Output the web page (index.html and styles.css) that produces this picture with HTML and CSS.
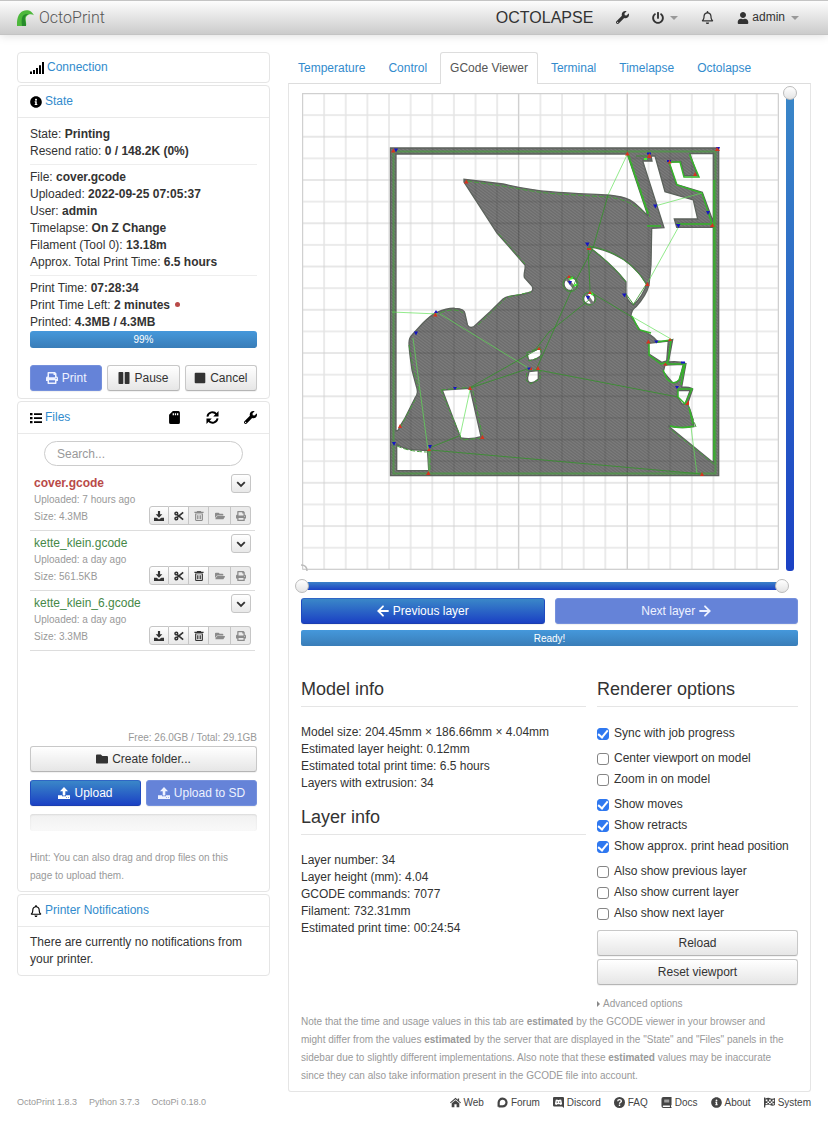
FILE: index.html
```html
<!DOCTYPE html>
<html lang="en">
<head>
<meta charset="utf-8">
<meta name="viewport" content="width=device-width, initial-scale=1">
<title>OctoPrint</title>
<link rel="stylesheet" href="styles.css">
</head>
<body>
<svg class="sprite" aria-hidden="true">
  <symbol id="wrench" viewBox="0 0 512 512"><path d="M507.73 109.1c-2.24-9.03-13.54-12.09-20.12-5.51l-74.36 74.36-67.88-11.31-11.31-67.88 74.36-74.36c6.62-6.62 3.43-17.9-5.66-20.16-47.38-11.74-99.55.91-136.58 37.93-39.64 39.64-50.55 97.1-34.05 147.2L18.74 402.76c-24.99 24.99-24.99 65.51 0 90.5 24.99 24.99 65.51 24.99 90.5 0l213.21-213.21c50.12 16.71 107.47 5.68 147.37-34.22 37.07-37.07 49.7-89.32 37.91-136.73zM64 472c-13.25 0-24-10.75-24-24 0-13.26 10.75-24 24-24s24 10.74 24 24c0 13.25-10.75 24-24 24z"/></symbol>
  <symbol id="power" viewBox="0 0 512 512"><path d="M400 54.1c63 45 104 118.6 104 201.9 0 136.8-110.8 247.7-247.5 248C120 504.3 8.2 393 8 256.4 7.9 173.1 48.9 99.3 111.8 54.2c11.7-8.3 28-4.8 35 7.7L162.6 90c5.9 10.5 3.1 23.8-6.6 31-41.5 30.8-68 79.6-68 134.9-.1 92.3 74.5 168.1 168 168.1 91.6 0 168.6-74.2 168-169.1-.3-51.8-24.7-101.8-68.1-134-9.7-7.2-12.4-20.5-6.5-30.9l15.8-28.1c7-12.4 23.2-16.1 34.8-7.8zM296 264V24c0-13.3-10.7-24-24-24h-32c-13.3 0-24 10.7-24 24v240c0 13.3 10.7 24 24 24h32c13.3 0 24-10.7 24-24z"/></symbol>
  <symbol id="bell" viewBox="0 0 448 512"><path d="M439.39 362.29c-19.32-20.76-55.47-51.99-55.47-154.29 0-77.7-54.48-139.9-127.94-155.16V32c0-17.67-14.32-32-31.98-32s-31.98 14.33-31.98 32v20.84C118.56 68.1 64.08 130.3 64.08 208c0 102.3-36.15 133.53-55.47 154.29-6 6.45-8.66 14.16-8.61 21.71.11 16.4 12.98 32 32.1 32h383.8c19.12 0 32-15.6 32.1-32 .05-7.55-2.61-15.27-8.61-21.71zM67.53 368c21.22-27.97 44.42-74.33 44.53-159.42 0-.2-.06-.38-.06-.58 0-61.86 50.14-112 112-112s112 50.14 112 112c0 .2-.06.38-.06.58.11 85.1 23.31 131.46 44.53 159.42H67.53zM224 512c35.32 0 63.97-28.65 63.97-64H160.03c0 35.35 28.65 64 63.97 64z"/></symbol>
  <symbol id="user" viewBox="0 0 448 512"><path d="M224 256c70.7 0 128-57.3 128-128S294.7 0 224 0 96 57.3 96 128s57.3 128 128 128zm89.6 32h-16.7c-22.2 10.2-46.9 16-72.9 16s-50.6-5.8-72.9-16h-16.7C60.2 288 0 348.2 0 422.4V464c0 26.5 21.5 48 48 48h352c26.5 0 48-21.5 48-48v-41.6c0-74.2-60.2-134.4-134.4-134.4z"/></symbol>
  <symbol id="info" viewBox="0 0 512 512"><path d="M256 8C119.043 8 8 119.083 8 256c0 136.997 111.043 248 248 248s248-111.003 248-248C504 119.083 392.957 8 256 8zm0 110c23.196 0 42 18.804 42 42s-18.804 42-42 42-42-18.804-42-42 18.804-42 42-42zm56 254c0 6.627-5.373 12-12 12h-88c-6.627 0-12-5.373-12-12v-24c0-6.627 5.373-12 12-12h12v-64h-12c-6.627 0-12-5.373-12-12v-24c0-6.627 5.373-12 12-12h64c6.627 0 12 5.373 12 12v100h12c6.627 0 12 5.373 12 12v24z"/></symbol>
  <symbol id="print" viewBox="0 0 512 512"><path d="M448 192V77.25c0-8.49-3.37-16.62-9.37-22.63L393.37 9.37c-6-6-14.14-9.37-22.63-9.37H96C78.33 0 64 14.33 64 32v160c-35.35 0-64 28.65-64 64v112c0 8.84 7.16 16 16 16h48v96c0 17.67 14.33 32 32 32h320c17.67 0 32-14.33 32-32v-96h48c8.84 0 16-7.16 16-16V256c0-35.35-28.65-64-64-64zm-64 256H128v-96h256v96zm0-224H128V64h192v48c0 8.84 7.16 16 16 16h48v96zm48 72c-13.25 0-24-10.75-24-24 0-13.26 10.75-24 24-24s24 10.74 24 24c0 13.25-10.75 24-24 24z"/></symbol>
  <symbol id="folder" viewBox="0 0 512 512"><path d="M464 128H272l-64-64H48C21.49 64 0 85.49 0 112v288c0 26.51 21.49 48 48 48h416c26.51 0 48-21.49 48-48V176c0-26.51-21.49-48-48-48z"/></symbol>
  <symbol id="folder-open" viewBox="0 0 576 512"><path d="M572.694 292.093L500.27 416.248A63.997 63.997 0 0 1 444.989 448H45.025c-18.523 0-30.064-20.093-20.731-36.093l72.424-124.155A64 64 0 0 1 152 256h399.964c18.523 0 30.064 20.093 20.73 36.093zM152 224h328v-48c0-26.51-21.49-48-48-48H272l-64-64H48C21.49 64 0 85.49 0 112v278.046l69.077-118.418C86.214 242.25 117.989 224 152 224z"/></symbol>
  <symbol id="signal" viewBox="0 0 14 12"><path d="M0 9.500h2V12H0zM3 8h2v4H3zM6 6h2v6H6zM9 3.300h2V12H9zM12 0h2v12h-2z"/></symbol>
  <symbol id="list" viewBox="0 0 12 12"><path d="M0 1h2.500v2.300H0zM0 5h2.500v2.300H0zM0 9h2.500v2.300H0zM4 1.200h8v1.800H4zM4 5.200h8v1.800H4zM4 9.200h8v1.800H4z"/></symbol>
  <symbol id="sd" viewBox="0 0 10 12"><path fill-rule="evenodd" d="M3.500 0H8.500A1.500 1.500 0 0 1 10 1.500V10.500A1.500 1.500 0 0 1 8.500 12H1.500A1.500 1.500 0 0 1 0 10.500V3.500zM3.300 2v2h1.200V2zM5.300 2v2h1.200V2zM7.300 2v2h1.200V2z"/></symbol>
  <symbol id="sync" viewBox="0 0 14 14"><path fill="none" stroke="currentColor" stroke-width="2" d="M1.500 6A5.500 5.500 0 0 1 11.300 3.600M12.500 8A5.500 5.500 0 0 1 2.700 10.400"/><path d="M13.500 0v5.800H7.800zM.5 14V8.200h5.700z"/></symbol>
  <symbol id="download" viewBox="0 0 12 12"><path d="M4.700 0h2.600v4H10L6 8 2 4h2.700zM0 8h3.200L6 10.300 8.800 8H12v4H0z"/></symbol>
  <symbol id="upload" viewBox="0 0 12 12"><path fill-rule="evenodd" d="M4.700 8.500h2.600V4.200H10L6 0 2 4.200h2.700zM0 8.300h4v1h4v-1h4V12H0zM8.200 10.200v.8h.8v-.8zM10 10.200v.8h.8v-.8z"/></symbol>
  <symbol id="cut" viewBox="0 0 12 12"><path fill="none" stroke="currentColor" stroke-width="2" d="M3.800 4.300L11 10.400M3.800 7.700L11 1.600"/><circle cx="2.800" cy="3" r="1.600" fill="none" stroke="currentColor" stroke-width="1.800"/><circle cx="2.800" cy="9" r="1.600" fill="none" stroke="currentColor" stroke-width="1.800"/></symbol>
  <symbol id="trash" viewBox="0 0 11 12"><path fill-rule="evenodd" d="M3.300 0h4.400l.6 1H11v1.400H0V1h2.700zM.8 3h9.400v7.600A1.400 1.400 0 0 1 8.800 12H2.200A1.400 1.400 0 0 1 .8 10.600zM2.200 4v6.800h6.600V4z"/><path d="M3.100 5h1v5h-1zM5 5h1v5H5zM6.900 5h1v5h-1z"/></symbol>
  <symbol id="pause" viewBox="0 0 12 12"><rect x=".5" width="4.800" height="12" rx=".8"/><rect x="6.700" width="4.800" height="12" rx=".8"/></symbol>
  <symbol id="stop" viewBox="0 0 12 12"><rect x=".7" y=".7" width="10.600" height="10.600" rx="1"/></symbol>
  <symbol id="chevron" viewBox="0 0 10 10"><path fill="none" stroke="currentColor" stroke-width="1.800" d="M1.200 3.200L5 7l3.800-3.800"/></symbol>
  <symbol id="left" viewBox="0 0 12 12"><path fill="none" stroke="currentColor" stroke-width="1.800" stroke-linecap="round" d="M6 1.300L1.300 6 6 10.700M1.500 6h9.500"/></symbol>
  <symbol id="right" viewBox="0 0 12 12"><path fill="none" stroke="currentColor" stroke-width="1.800" stroke-linecap="round" d="M6 1.300L10.700 6 6 10.700M10.500 6H1"/></symbol>
  <symbol id="home" viewBox="0 0 13 12"><path d="M6.500.5l2.700 2.300V1.200h1.600v3L13 6l-.8 1-5.700-4.700L.8 7 0 6zM6.500 3.300L11 7v4.500H7.800V8H5.200v3.500H2V7z"/></symbol>
  <symbol id="forum" viewBox="0 0 12 12"><path fill="none" stroke="currentColor" stroke-width="2.400" d="M1.800 10.600V6A4.300 4.300 0 1 1 6 10.300H1.800"/></symbol>
  <symbol id="discord" viewBox="0 0 12 12"><path fill-rule="evenodd" d="M1.500 0h9A1.400 1.400 0 0 1 12 1.400V12l-2-1.600H1.500A1.400 1.400 0 0 1 0 9V1.400A1.400 1.400 0 0 1 1.500 0zM3 3L2 8l2 .7.600-.8h2.800l.6.800 2-.7-1-5-1.700-.4-.4.6H5.100l-.4-.6zM4 5h1.300v1.400H4zM6.700 5H8v1.400H6.700z"/></symbol>
  <symbol id="faq" viewBox="0 0 12 12"><circle cx="6" cy="6" r="6"/><path fill="none" stroke="#fff" stroke-width="1.500" d="M4.100 4.700C4.100 2.200 8 2.300 8 4.500 8 5.800 6 5.700 6 7.300M6 8.200v1.600"/></symbol>
  <symbol id="book" viewBox="0 0 11 12"><path fill-rule="evenodd" d="M2.200 0H11v9h-.6v1.800h.6V12H2.200A2.200 2.200 0 0 1 0 9.800V2.200A2.200 2.200 0 0 1 2.200 0zM3 3v.8h5.500V3zM3 4.800v.8h5.500v-.8zM2.200 9.200a.8.800 0 0 0 0 1.600h7V9.200z"/></symbol>
  <symbol id="flag" viewBox="0 0 13 12"><path fill-rule="evenodd" d="M0 0h1.500v1.200C4 0 6 0 8 1.200c2 .6 3.500.1 5-.5V9c-2 1-4 1-6 0-2-.6-3.500-.4-5.500.3V12H0zM2 2.500v2h2v-2zM6 2.500v2h2v-2zM10 2.800v2h2v-2zM4 4.700v2h2v-2zM8 4.900v2h2v-2zM2 6.600v1.600h2V6.600zM6 6.700v1.500h2V6.700zM10 7v1.400h2V7z"/></symbol>
</svg>

<header class="navbar">
  <a class="brand" href="#">
    <svg class="logo" viewBox="0 0 17 16" aria-hidden="true"><path fill="#4db83c" d="M0 16C-.3 11 .4 6 3.300 3 6-.2 11-.6 14.200 1.700c1.300 1 2.200 2.200 2.700 3.600-1.500-1.100-3.200-1.300-5-.8-2 .8-3.200 2.200-3.200 4.300C8.700 11 9.500 13 9 16z"/><path fill="#278a2c" d="M5 16C4.600 12.500 4.300 9 5.500 6.500c1-2 3.500-3 5.800-2.300-2.400.8-3.600 2.400-3.500 4.800.1 2.400 1.600 4.600 1.200 7z"/></svg>
    <span>OctoPrint</span>
  </a>
  <nav class="nav">
    <a class="lapse" href="#">OCTOLAPSE</a>
    <a href="#" aria-label="Settings"><svg class="icon nav-icon"><use href="#wrench"/></svg></a>
    <a href="#" aria-label="System"><svg class="icon"><use href="#power"/></svg><i class="caret"></i></a>
    <a href="#" aria-label="Notifications"><svg class="icon nav-icon"><use href="#bell"/></svg></a>
    <a href="#"><svg class="icon"><use href="#user"/></svg><span class="admin">admin</span><i class="caret"></i></a>
  </nav>
</header>

<div class="page">
  <aside class="sidebar">
    <section class="panel"><h2 class="heading"><svg class="icon wide"><use href="#signal"/></svg><a href="#">Connection</a></h2></section>

    <section class="panel">
      <h2 class="heading"><svg class="icon"><use href="#info"/></svg><a href="#">State</a></h2>
      <div class="inner state">
        <div>State: <b>Printing</b></div>
        <div>Resend ratio: <b>0 / 148.2K (0%)</b></div>
        <hr>
        <div>File: <b>cover.gcode</b></div>
        <div>Uploaded: <b>2022-09-25 07:05:37</b></div>
        <div>User: <b>admin</b></div>
        <div>Timelapse: <b>On Z Change</b></div>
        <div>Filament (Tool 0): <b>13.18m</b></div>
        <div>Approx. Total Print Time: <b>6.5 hours</b></div>
        <hr>
        <div>Print Time: <b>07:28:34</b></div>
        <div>Print Time Left: <b>2 minutes</b> <i class="dot"></i></div>
        <div>Printed: <b>4.3MB / 4.3MB</b></div>
        <div class="bar">99%</div>
        <div class="jobs">
          <button class="btn primary" disabled><svg class="icon"><use href="#print"/></svg>Print</button>
          <button class="btn"><svg class="icon"><use href="#pause"/></svg>Pause</button>
          <button class="btn"><svg class="icon"><use href="#stop"/></svg>Cancel</button>
        </div>
      </div>
    </section>

    <section class="panel">
      <div class="heading files-heading">
        <h2 class="title"><svg class="icon"><use href="#list"/></svg><a href="#">Files</a></h2>
        <div class="tools">
          <button class="tool" aria-label="SD card"><svg class="icon"><use href="#sd"/></svg></button>
          <button class="tool" aria-label="Refresh"><svg class="icon"><use href="#sync"/></svg></button>
          <button class="tool" aria-label="File settings"><svg class="icon"><use href="#wrench"/></svg></button>
        </div>
      </div>
      <div class="inner">
        <input class="search" type="text" placeholder="Search..." aria-label="Search">
        <div class="list">
          <article class="entry printing">
            <h3 class="name">cover.gcode</h3><button class="mini toggle" aria-label="Details"><svg class="icon"><use href="#chevron"/></svg></button>
            <div class="meta"><div>Uploaded: 7 hours ago</div><div>Size: 4.3MB</div></div>
            <div class="group"><button class="mini" aria-label="Download"><svg class="icon"><use href="#download"/></svg></button><button class="mini" aria-label="Cut"><svg class="icon"><use href="#cut"/></svg></button><button class="mini" aria-label="Delete" disabled><svg class="icon"><use href="#trash"/></svg></button><button class="mini open" aria-label="Load" disabled><svg class="icon"><use href="#folder-open"/></svg></button><button class="mini" aria-label="Print" disabled><svg class="icon"><use href="#print"/></svg></button></div>
          </article>
          <article class="entry">
            <h3 class="name">kette_klein.gcode</h3><button class="mini toggle" aria-label="Details"><svg class="icon"><use href="#chevron"/></svg></button>
            <div class="meta"><div>Uploaded: a day ago</div><div>Size: 561.5KB</div></div>
            <div class="group"><button class="mini" aria-label="Download"><svg class="icon"><use href="#download"/></svg></button><button class="mini" aria-label="Cut"><svg class="icon"><use href="#cut"/></svg></button><button class="mini" aria-label="Delete"><svg class="icon"><use href="#trash"/></svg></button><button class="mini open" aria-label="Load" disabled><svg class="icon"><use href="#folder-open"/></svg></button><button class="mini" aria-label="Print" disabled><svg class="icon"><use href="#print"/></svg></button></div>
          </article>
          <article class="entry">
            <h3 class="name">kette_klein_6.gcode</h3><button class="mini toggle" aria-label="Details"><svg class="icon"><use href="#chevron"/></svg></button>
            <div class="meta"><div>Uploaded: a day ago</div><div>Size: 3.3MB</div></div>
            <div class="group"><button class="mini" aria-label="Download"><svg class="icon"><use href="#download"/></svg></button><button class="mini" aria-label="Cut"><svg class="icon"><use href="#cut"/></svg></button><button class="mini" aria-label="Delete"><svg class="icon"><use href="#trash"/></svg></button><button class="mini open" aria-label="Load" disabled><svg class="icon"><use href="#folder-open"/></svg></button><button class="mini" aria-label="Print" disabled><svg class="icon"><use href="#print"/></svg></button></div>
          </article>
        </div>
        <div class="space">Free: 26.0GB / Total: 29.1GB</div>
        <button class="btn block"><svg class="icon"><use href="#folder"/></svg>Create folder...</button>
        <div class="uploads">
          <button class="btn primary"><svg class="icon"><use href="#upload"/></svg>Upload</button>
          <button class="btn primary" disabled><svg class="icon"><use href="#upload"/></svg>Upload to SD</button>
        </div>
        <div class="bar empty"></div>
        <p class="hint">Hint: You can also drag and drop files on this page to upload them.</p>
      </div>
    </section>

    <section class="panel">
      <h2 class="heading"><svg class="icon"><use href="#bell"/></svg><a href="#">Printer Notifications</a></h2>
      <div class="inner">There are currently no notifications from your printer.</div>
    </section>
  </aside>

  <main class="main">
    <nav class="tabs">
      <a href="#">Temperature</a><a href="#">Control</a><a class="active" href="#">GCode Viewer</a><a href="#">Terminal</a><a href="#">Timelapse</a><a href="#">Octolapse</a>
    </nav>
    <div class="content">
      <div class="viewer">
        <svg class="canvas" viewBox="301 92 479 479" role="img" aria-label="Layer 34">
          <defs>
            <pattern id="bed-v" x="301.500" y="93" width="21.630" height="476" patternUnits="userSpaceOnUse"><path stroke="#e6e6e6" stroke-width="1.600" d="M1 0v476"/></pattern>
            <pattern id="bed-h" x="302" y="92.500" width="476" height="43.260" patternUnits="userSpaceOnUse"><path stroke="#cfcfcf" stroke-width="1" d="M0 1h476"/><path stroke="#e4e4e4" stroke-width="1.400" d="M0 22.600h476"/></pattern>
            <pattern id="infill" width="4" height="3" patternUnits="userSpaceOnUse"><path stroke="#fff" stroke-opacity=".08" stroke-width=".8" d="M0 0l4 3"/><path stroke="#000" stroke-opacity=".07" stroke-width=".8" d="M0 1.500l2 1.500M2 0l2 1.500"/></pattern>
            <path id="part" d="M390.500 148H718.700V475.700H390.500Z
              M396 154V431L398.300 430C400 425 403 422 405 418L415 398C418 394 418 391 416 385L412 370C410 355 409 350 409 343C409 339 410 337 412 335L423 323C428 318 432 314 437 312.300C445 309 450 308 455 308.300C462 308.500 465 311 465 314L467.500 325C469 328 471 328 474 326.500L490 311.700L503 299C508 295 515 296 522 294.500L531 292Q534 290 532 286L524.500 277.700C523 274 526 269 525 265L497 233L464 182V179.300L503 184C525 189 540 191 550 191.700C575 194 595 194 608 195C618 196 624 197 630 200C637 204 643 211 648 216L627.300 154Z
              M396.700 444.300Q405 451 427.500 450.300L428.700 470.700H396.700Z
              M442.300 390L470 388.300L481 436.700Q471 440 460.700 438Z
              M528 353Q535 351 540 348.300Q542 353 540.500 356Q534 361 529 360Q527 357 528 353Z
              M529 371.500L538.300 370.700V379Q534 383 530.700 382.700Q527 382 527.700 377Z
              M577 284a6.500 6.500 0 1 0-13 0a6.500 6.500 0 1 0 13 0
              M595 298.700a5.700 5.700 0 1 0-11.400 0a5.700 5.700 0 1 0 11.400 0
              M588.500 246.500Q628 253 646.700 284Q643 296 633.500 305Q626 300 626 293V282Q613 265 588.500 246.500Z
              M651.700 228.300L664 227.700L642.700 161H652L651 156H655L665 191.700L693.300 200L697.700 219H674.300L676.700 227.300H713.300V462.700L668.300 426Q682 429 694 426.500Q692 412 687.500 404L692.700 389Q690 387 681.700 387L686 363.500Q679 361 668.500 362L672.700 339.500Q665 342 657 341Q652 334 640 330L631 316.700Q631 310 636 306.700Q646 296 649 285L651 265Z
              M648.300 343.300L668.300 341L666.700 361L661.700 362.300L649 354Z
              M665 365L683.300 364.300L679.300 380Q676 384 672 382L663.300 371.700Z
              M677.300 390.700H690L685 404H682L677.300 396.700Z
              M690 153.700H713.300V222L702.300 192.300L676 184.300L669 162.300L681 161.700L684.300 175.700H697.300Z"/>
          </defs>
          <path fill="url(#bed-v)" d="M302 93h476v476H302z"/>
          <path fill="url(#bed-h)" d="M302 93h476v476H302z"/>
          <path fill="none" stroke="#d0d0d0" d="M302 93.500H778.500V569.500H302.500V93M518.500 93V569M627.500 93V569"/>
          <path fill="none" stroke="#bbb" stroke-width="1.500" d="M301 565q6 0 6 6"/>
          <use href="#part" fill="#000" fill-opacity=".55" fill-rule="evenodd"/>
          <use href="#part" fill="url(#infill)" fill-rule="evenodd"/>
          <use href="#part" fill="none" stroke="#5c625c" stroke-width="1.300"/>
          <path fill="none" stroke="#4a9c42" stroke-width="2" stroke-opacity=".7" d="M393.500 151V473.500H715.500V151.500H393"/>
          <g fill="none" stroke="#3f9a36" stroke-width="1">
            <path stroke-dasharray="5 2" stroke="#489f3e" d="M467 181L503 186Q535 192 551 193.500L608 197Q632 200 645 214M629 155L650 217M409 345Q413 370 419 390M400 428L415 400M430 451V472M397 446Q410 452 429 452M441 390L472 387L483 438L462 440L441 390M715 228V465L669 428M696 427L688 405M440 313Q455 307 463 313M508 297L531 292M478 325L506 298M525 264L498 233"/>
            <path stroke="#35b52a" stroke-width="1.500" d="M651 333L640 330M657 342L671 340L668 362L661 364L649 355V343M665 364H685L681 385M663 370L667 379Q673 386 679 380L684 365M678 389L692 389L685 404L678 397V389M690 154V156L699 177H684L680 162H669L677 185L702 193L712 224H677M694 426Q682 429 670 426M693 424L689 408M714 180V460M632 316L639 330M647 226H661M628 155L648 214"/>
            <path d="M589 246Q628 253 646 284M626 282Q613 265 589 247M626 294L634 305"/>
            <circle cx="570.500" cy="284" r="7.500"/><circle cx="589.300" cy="298.700" r="6.500"/>
            <path stroke-dasharray="4 2" d="M526 353L541 347V357L529 361ZM527 370H540V379L530 384L526 380Z"/>
          </g>
          <path fill="none" stroke="#777" stroke-width="3" d="M567 279l8 10M586 294l7 10"/>
          <g fill="none" stroke="#5ce052" stroke-width=".9" stroke-opacity=".75">
            <path d="M392 312L438 314M440 314L530 369M627 155L608 195M655 206L702 193M678 228L648 282M631 316L671 339M691 427L697 474M413 338L428 450M470 390L460 436M429 452V472"/>
          </g>
          <g fill="none" stroke="#329328" stroke-width=".8">
            <path d="M608 195L593 248L576 280L536 370M647 283L633 305M429 448L459 436M470 388L530 368M471 387L540 348M538 370L678 397M430 450L702 474M535 350L549 332L589 300M588 247L590 290M592 293L632 317M650 156H636"/>
          </g>
          <path stroke="#44f233" stroke-width="2" d="M569 279l4-1M574 286l3-2M644 159h3M590 292l3 3"/>
          <path fill="#1515c4" d="M394 148.500h4l-2 4zM434 313h4l-2-3zM414 331.500h4l-2 4zM585 242.500h4.500l-2 4zM568 281h4l-2 4zM586 296h4l-2 4zM622 293.500h4.500l-2 4zM653 204.500h4.500l-2 4zM676 224h4.500l-2 4zM706 211h4l-2 4zM654 340.500h4.500l-2 3zM681 361.500h4v2h-4zM675 386h4l-2 3zM453 387h4l-2 3zM428 445h4l-2 4zM392 442h4l-2 4zM527 367.500h4l-2 3zM716 147h4l-2 4zM647 152.500h4v2h-4zM667 160h4v2h-4z"/>
          <path fill="#d7331e" d="M391 152.500h4.500l-2-4zM464 183.500h4.500l-2-4zM433 316.500h4.500l-2-4zM625 155.500h4.500l-2-4zM647 158h4.500l-2-5zM668 163.500h3.500l-2-4zM693 176h4l-2-4zM715 151h5l-3-4zM710 227h4.500l-2-4zM645 286h4.500l-2-4zM587 250h4v-2h-4zM567 278h4l-2-3zM588 294h4l-2-3zM646 343.500h4.500l-2-4zM668 341h4l-2-3zM663 365.500h4.500l-2-3zM685 405h4v-5zM537 350h4l-2-3zM529 370h3v-3zM536 370h4l-2-4zM468 390h4l-2-4zM480 439h4.500l-2-4zM398 428h4l-2-4zM427 451h4l-2-3zM426 475h4.500l-2-4zM700 476h4l-2-4z"/>
        </svg>
        <div class="layer"><input type="range" aria-label="Layer" min="0" max="34" value="34"></div>
      </div>
      <div class="commands"><input type="range" aria-label="First command" value="0"><input type="range" aria-label="Last command" value="100"></div>
      <div class="steps">
        <button class="btn primary"><svg class="icon"><use href="#left"/></svg>Previous layer</button>
        <button class="btn primary next" disabled>Next layer<svg class="icon"><use href="#right"/></svg></button>
      </div>
      <div class="bar ready">Ready!</div>
      <div class="details">
        <div class="infos">
          <h3 class="subhead">Model info</h3>
          <div class="facts"><div>Model size: 204.45mm × 186.66mm × 4.04mm</div><div>Estimated layer height: 0.12mm</div><div>Estimated total print time: 6.5 hours</div><div>Layers with extrusion: 34</div></div>
          <h3 class="subhead">Layer info</h3>
          <div class="facts"><div>Layer number: 34</div><div>Layer height (mm): 4.04</div><div>GCODE commands: 7077</div><div>Filament: 732.31mm</div><div>Estimated print time: 00:24:54</div></div>
        </div>
        <div class="options">
          <h3 class="subhead">Renderer options</h3>
          <div class="checks"><label><input type="checkbox" checked>Sync with job progress</label></div>
          <div class="checks"><label><input type="checkbox">Center viewport on model</label><label><input type="checkbox">Zoom in on model</label></div>
          <div class="checks"><label><input type="checkbox" checked>Show moves</label><label><input type="checkbox" checked>Show retracts</label><label><input type="checkbox" checked>Show approx. print head position</label></div>
          <div class="checks"><label><input type="checkbox">Also show previous layer</label><label><input type="checkbox">Also show current layer</label><label><input type="checkbox">Also show next layer</label></div>
          <div class="actions">
            <button class="btn block">Reload</button>
            <button class="btn block">Reset viewport</button>
          </div>
          <a class="advanced" href="#"><i class="arrow"></i>Advanced options</a>
        </div>
      </div>
      <p class="note">Note that the time and usage values in this tab are <b>estimated</b> by the GCODE viewer in your browser and might differ from the values <b>estimated</b> by the server that are displayed in the "State" and "Files" panels in the sidebar due to slightly different implementations. Also note that these <b>estimated</b> values may be inaccurate since they can also take information present in the GCODE file into account.</p>
    </div>
  </main>
</div>

<footer class="footer">
  <div class="versions"><span>OctoPrint 1.8.3</span><span>Python 3.7.3</span><span>OctoPi 0.18.0</span></div>
  <nav class="links">
    <a href="#"><svg class="icon"><use href="#home"/></svg>Web</a>
    <a href="#"><svg class="icon"><use href="#forum"/></svg>Forum</a>
    <a href="#"><svg class="icon"><use href="#discord"/></svg>Discord</a>
    <a href="#"><svg class="icon"><use href="#faq"/></svg>FAQ</a>
    <a href="#"><svg class="icon"><use href="#book"/></svg>Docs</a>
    <a href="#"><svg class="icon"><use href="#info"/></svg>About</a>
    <a href="#"><svg class="icon"><use href="#flag"/></svg>System</a>
  </nav>
</footer>
</body>
</html>
```
FILE: styles.css
```css
* { box-sizing: border-box; }
body {
  margin: 0;
  background: #fff;
  color: #333;
  font: 12px/17px "Liberation Sans", Arial, sans-serif;
}
a { color: #328bcd; text-decoration: none; }
h2, h3, p { margin: 0; font-weight: normal; }
button, input { font: inherit; color: inherit; margin: 0; }
.sprite { position: absolute; width: 0; height: 0; }
.icon { width: 12px; height: 12px; flex: none; fill: currentColor; }
.icon.wide { width: 14px; }

.navbar {
  display: flex;
  align-items: center;
  justify-content: space-between;
  height: 35px;
  padding: 0 29px 0 17px;
  border-top: 1px solid #c4c4c4;
  border-bottom: 1px solid #c4c4c4;
  background: linear-gradient(#fdfdfd, #cbcbcb);
  box-shadow: 0 1px 9px rgba(0, 0, 0, .13);
}
.brand {
  display: flex;
  align-items: center;
  gap: 5px;
  color: #555;
  font: 300 16px/20px Roboto, "Liberation Sans", sans-serif;
}
.logo { width: 17px; height: 16px; }
.nav { display: flex; align-items: center; gap: 23px; }
.nav a { display: flex; align-items: center; color: #333; }
.nav .lapse { font-size: 16px; }
.nav-icon { width: 13px; height: 13px; }
.admin { margin-left: 3px; }
.caret {
  margin-left: 6px;
  border: 4px solid transparent;
  border-top-color: #999;
  border-bottom: 0;
}

.page {
  display: grid;
  grid-template-columns: minmax(0, 253fr) minmax(0, 523fr);
  gap: 18px;
  align-items: start;
  padding: 17px 17px 0;
}
.sidebar { display: grid; gap: 2px; }
.panel {
  border: 1px solid #e5e5e5;
  border-radius: 4px;
}
.heading {
  display: flex;
  align-items: center;
  gap: 3px;
  height: 29px;
  padding: 0 12px;
  color: #000;
  font-size: 12px;
}
.heading:not(:only-child) { height: 32px; border-bottom: 1px solid #e9e9e9; }
.files-heading { justify-content: space-between; }
.title { display: flex; align-items: center; gap: 3px; font-size: 12px; }
.tools { display: flex; gap: 25px; }
.tool { display: flex; padding: 0; border: 0; background: none; color: #000; }
.tool .icon { width: 13px; height: 13px; }
.inner { padding: 7px 12px; }
.inner.state { padding-top: 8px; }
hr { height: 1px; margin: 4px 0; border: 0; background: #eee; }
.dot {
  display: inline-block;
  width: 5px;
  height: 5px;
  margin-left: 2px;
  border-radius: 50%;
  background: #b94a48;
  vertical-align: 2px;
}
.bar {
  height: 17px;
  border-radius: 3px;
  background: linear-gradient(#4598db, #397db8);
  color: #fff;
  font-size: 10px;
  line-height: 18px;
  text-align: center;
}
.bar.empty { margin-top: 8px; background: linear-gradient(#f1f1f1, #f9f9f9); box-shadow: inset 0 1px 2px rgba(0, 0, 0, .1); }
.btn {
  display: flex;
  align-items: center;
  justify-content: center;
  gap: 4px;
  height: 26px;
  padding: 0 8px;
  border: 1px solid #c8c8c8;
  border-bottom-color: #b5b5b5;
  border-radius: 3px;
  background: linear-gradient(#fff, #e6e6e6);
  box-shadow: 0 1px 1px rgba(0, 0, 0, .06);
  white-space: nowrap;
}
.btn.block { width: 100%; }
.btn.primary { border-color: #2f66c5 #1f4bc0 #1b3eb0; background: linear-gradient(#3a87c8, #1b41c4); color: #fff; }
.btn.primary:disabled { border-color: #7590dc; background: #6583d8; color: #eef2ff; }
.jobs { display: grid; grid-template-columns: repeat(3, minmax(0, 1fr)); gap: 5px; margin-top: 17px; }
.uploads { display: grid; grid-template-columns: repeat(2, minmax(0, 1fr)); gap: 5px; margin-top: 8px; }

.search {
  display: block;
  width: calc(100% - 28px);
  height: 25px;
  margin: 0 14px 5px;
  padding: 0 12px;
  border: 1px solid #ccc;
  border-radius: 13px;
  background: #fff;
}
.search::placeholder { color: #999; }
.list { height: 259px; margin-right: 2px; }
.entry {
  display: grid;
  grid-template-columns: 1fr auto;
  grid-template-rows: 20px 39px;
  align-items: start;
  height: 60px;
  padding: 0 4px;
  border-bottom: 1px solid #ddd;
}
.name { padding-top: 4px; color: #468847; font-size: 12px; }
.printing .name { color: #b94a48; font-weight: bold; }
.meta { color: #999; font-size: 10px; }
.mini {
  display: flex;
  align-items: center;
  justify-content: center;
  width: 20px;
  height: 19px;
  padding: 0;
  border: 1px solid #c6c6c6;
  background: linear-gradient(#fff, #e8e8e8);
}
.mini .icon { width: 10px; height: 10px; }
.mini:disabled { background: #ebebeb; color: #8a8a8a; }
.toggle { justify-self: end; margin-top: 3px; border-radius: 3px; }
.group { display: flex; padding-top: 15px; }
.group .mini + .mini { border-left: 0; }
.group .mini:first-child { border-radius: 3px 0 0 3px; }
.group .mini:last-child { border-radius: 0 3px 3px 0; }
.group .open { width: 22px; }
.space { color: #999; font-size: 10px; line-height: 16px; text-align: right; }
.hint { margin: 18px 0 -1px; padding-right: 12px; color: #999; font-size: 10px; line-height: 18px; }

.tabs { display: flex; flex-wrap: wrap; gap: 3px; }
.tabs a { padding: 7px 9px 6px; border: 1px solid transparent; border-bottom: 0; }
.tabs .active {
  z-index: 1;
  margin-bottom: -1px;
  border-color: #ddd;
  border-radius: 3px 3px 0 0;
  background: #fff;
  color: #555;
}
.content {
  padding: 8px 12px 6px;
  border: 1px solid #e5e5e5;
  border-top-color: #ddd;
  border-radius: 0 0 3px 3px;
}
.viewer { display: flex; gap: 6px; padding-right: 4px; }
.canvas { display: block; flex: 1; min-width: 0; }
.layer {
  position: relative;
  flex: none;
  width: 8px;
  margin-top: 1px;
  border-radius: 3px;
  background: linear-gradient(#3a87c8, #1b41c4);
}
.commands {
  position: relative;
  height: 8px;
  margin: 11px 15px 8px 0;
  border-radius: 3px;
  background: linear-gradient(#3a80c8, #1b41c4);
}
input[type="range"] {
  position: absolute;
  appearance: none;
  background: none;
  pointer-events: none;
}
.layer input { top: -7px; left: -3px; width: 14px; height: calc(100% + 14px); writing-mode: vertical-lr; direction: rtl; }
.commands input { top: -3px; left: -6px; width: calc(100% + 12px); height: 14px; }
input[type="range"]::-webkit-slider-thumb {
  appearance: none;
  width: 14px;
  height: 14px;
  border: 1px solid #bbb;
  border-radius: 50%;
  background: linear-gradient(#fff, #e4e4e4);
  pointer-events: auto;
}
.steps { display: grid; grid-template-columns: repeat(2, minmax(0, 1fr)); gap: 10px; }
.bar.ready { height: 16px; margin-top: 6px; border-radius: 2px; }

.details { display: grid; grid-template-columns: minmax(0, 285fr) minmax(0, 201fr); gap: 11px; margin-top: 26px; }
.subhead { height: 35px; border-bottom: 1px solid #e5e5e5; font-size: 18px; line-height: 34px; }
.facts { padding: 17px 0 8px; }
.options .subhead { margin-bottom: 16px; }
.checks { display: grid; margin-bottom: 4px; }
.checks label { display: flex; align-items: center; gap: 5px; height: 21px; }
input[type="checkbox"] {
  display: grid;
  place-items: center;
  appearance: none;
  width: 12px;
  height: 12px;
  border: 1px solid #858585;
  border-radius: 3px;
  background: #fff;
}
input[type="checkbox"]:checked { border-color: #2f78f0; background: #2f78f0; }
input[type="checkbox"]:checked::before {
  content: "";
  width: 4px;
  height: 8px;
  margin-top: -2px;
  border: solid #fff;
  border-width: 0 2px 2px 0;
  transform: rotate(40deg);
}
.actions { display: grid; gap: 3px; margin-top: 6px; }
.advanced { display: flex; align-items: center; gap: 3px; margin-top: 10px; color: #999; font-size: 10px; }
.arrow { border: 3px solid transparent; border-left-color: #888; border-right: 0; }
.note { margin-top: 1px; padding-right: 10px; color: #999; font-size: 10px; line-height: 18px; }

.footer { display: flex; justify-content: space-between; align-items: center; padding: 2px 17px 14px; }
.versions { display: flex; gap: 12px; color: #999; font-size: 9px; }
.links { display: flex; gap: 13px; font-size: 10px; }
.links a { display: flex; align-items: center; gap: 3px; color: #444; }
.links .icon { width: 11px; height: 11px; }
```
